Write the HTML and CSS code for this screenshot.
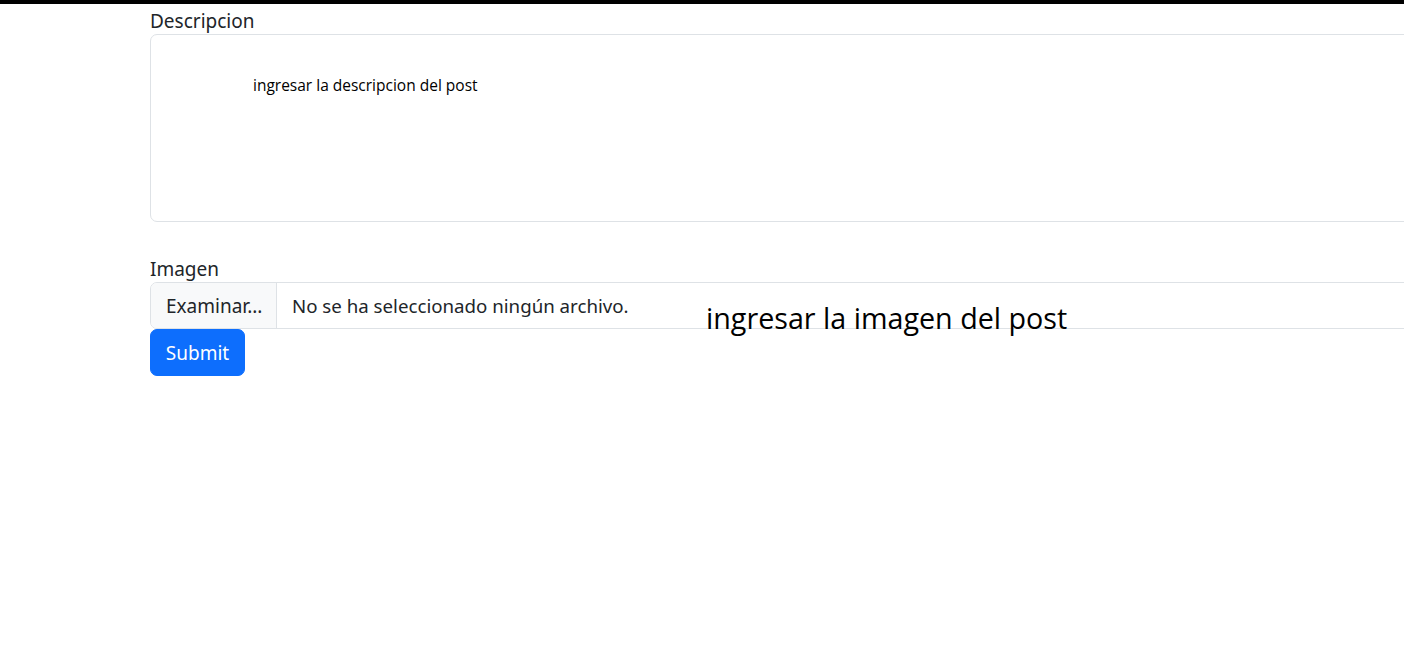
FILE: index.html
```html
<!DOCTYPE html>
<html lang="es">
<head>
<meta charset="utf-8">
<title>Post</title>
<link rel="stylesheet" href="styles.css">
</head>
<body>
<div class="topbar"></div>
<form class="form">
  <div class="field field-desc">
    <label class="label" for="desc">Descripcion</label>
    <div class="textarea" id="desc"></div>
    <span class="note note-desc">ingresar la descripcion del post</span>
  </div>
  <div class="field field-img">
    <label class="label">Imagen</label>
    <div class="file">
      <span class="file-btn">Examinar...</span>
      <span class="file-name">No se ha seleccionado ningún archivo.</span>
    </div>
    <span class="note note-img">ingresar la imagen del post</span>
  </div>
  <button type="button" class="submit">Submit</button>
</form>
</body>
</html>
```

FILE: styles.css
```css
html, body {
  margin: 0;
  padding: 0;
  background: #fff;
  overflow: hidden;
}
body {
  font-family: "Noto Sans", "Open Sans", sans-serif;
  font-size: 19px;
  color: #212529;
  width: 1404px;
  height: 654px;
}
.topbar {
  height: 4px;
  background: #000;
}
.form {
  padding-left: 150px;
  display: flex;
  flex-direction: column;
  align-items: flex-start;
}
.field {
  position: relative;
  width: 1400px;
  display: flex;
  flex-direction: column;
}
.label {
  box-sizing: border-box;
  height: 30px;
  padding-top: 4px;
  line-height: 26px;
}
.textarea {
  height: 186px;
  border: 1px solid #dee2e6;
  border-radius: 7px;
}
.field-img {
  margin-top: 32px;
}
.field-img .label {
  height: 28px;
  padding-top: 2px;
  line-height: 26px;
}
.file {
  display: flex;
  height: 45px;
  border: 1px solid #dee2e6;
  border-radius: 7px;
  overflow: hidden;
  align-items: stretch;
}
.file-btn {
  background: #f8f9fa;
  border-right: 1px solid #dee2e6;
  padding: 0 15px;
  display: flex;
  align-items: center;
  width: 95px;
}
.file-name {
  padding: 0 15px;
  display: flex;
  align-items: center;
  font-size: 18.7px;
}
.note {
  position: absolute;
  font-family: "Open Sans", "Noto Sans", sans-serif;
  color: #000;
  white-space: nowrap;
  line-height: 1;
}
.note-desc {
  left: 103px;
  top: 74px;
  font-size: 15.5px;
}
.note-img {
  left: 556px;
  top: 50px;
  font-size: 28.7px;
}
.submit {
  font-family: inherit;
  font-size: 19px;
  color: #fff;
  background: #0d6efd;
  border: 1px solid #0d6efd;
  border-radius: 7px;
  height: 47px;
  width: 95px;
  padding: 0;
  margin-top: 0;
  cursor: pointer;
}
```
